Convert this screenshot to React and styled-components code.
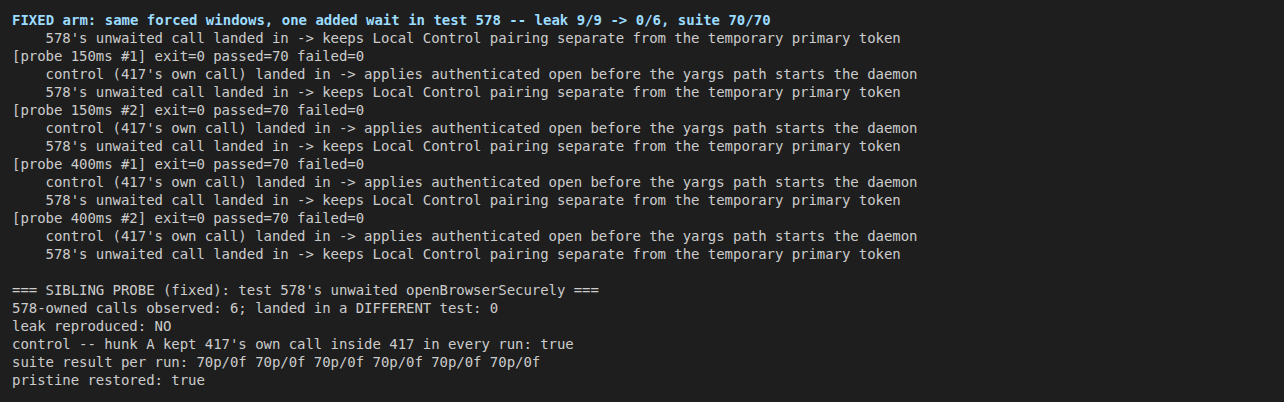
import React from "react";
import styled, { createGlobalStyle } from "styled-components";

const GlobalStyle = createGlobalStyle`
  html, body {
    margin: 0;
    padding: 0;
    background: #1e1e1e;
  }
`;

const Terminal = styled.div`
  box-sizing: border-box;
  width: 1284px;
  height: 402px;
  padding: 11px 12px;
  background: #1e1e1e;
  color: #cccccc;
  font-family: "DejaVu Sans Mono", monospace;
  font-size: 14px;
  line-height: 18px;
  white-space: pre;
  overflow: hidden;
`;

const Line = styled.div`
  height: 18px;
  color: ${(p) => (p.$heading ? "#9cdcfe" : "inherit")};
  font-weight: ${(p) => (p.$heading ? "bold" : "normal")};
  letter-spacing: ${(p) => (p.$heading ? "0" : "-0.045px")};
`;

const landedOwn =
  "    control (417's own call) landed in -> applies authenticated open before the yargs path starts the daemon";
const landedUnwaited =
  "    578's unwaited call landed in -> keeps Local Control pairing separate from the temporary primary token";

const lines = [
  landedUnwaited,
  "[probe 150ms #1] exit=0 passed=70 failed=0",
  landedOwn,
  landedUnwaited,
  "[probe 150ms #2] exit=0 passed=70 failed=0",
  landedOwn,
  landedUnwaited,
  "[probe 400ms #1] exit=0 passed=70 failed=0",
  landedOwn,
  landedUnwaited,
  "[probe 400ms #2] exit=0 passed=70 failed=0",
  landedOwn,
  landedUnwaited,
  "",
  "=== SIBLING PROBE (fixed): test 578's unwaited openBrowserSecurely ===",
  "578-owned calls observed: 6; landed in a DIFFERENT test: 0",
  "leak reproduced: NO",
  "control -- hunk A kept 417's own call inside 417 in every run: true",
  "suite result per run: 70p/0f 70p/0f 70p/0f 70p/0f 70p/0f 70p/0f",
  "pristine restored: true",
];

export default function App() {
  return (
    <>
      <GlobalStyle />
      <Terminal>
        <Line $heading>
          FIXED arm: same forced windows, one added wait in test 578 -- leak 9/9 -&gt; 0/6, suite 70/70
        </Line>
        {lines.map((text, i) => (
          <Line key={i}>{text}</Line>
        ))}
      </Terminal>
    </>
  );
}
